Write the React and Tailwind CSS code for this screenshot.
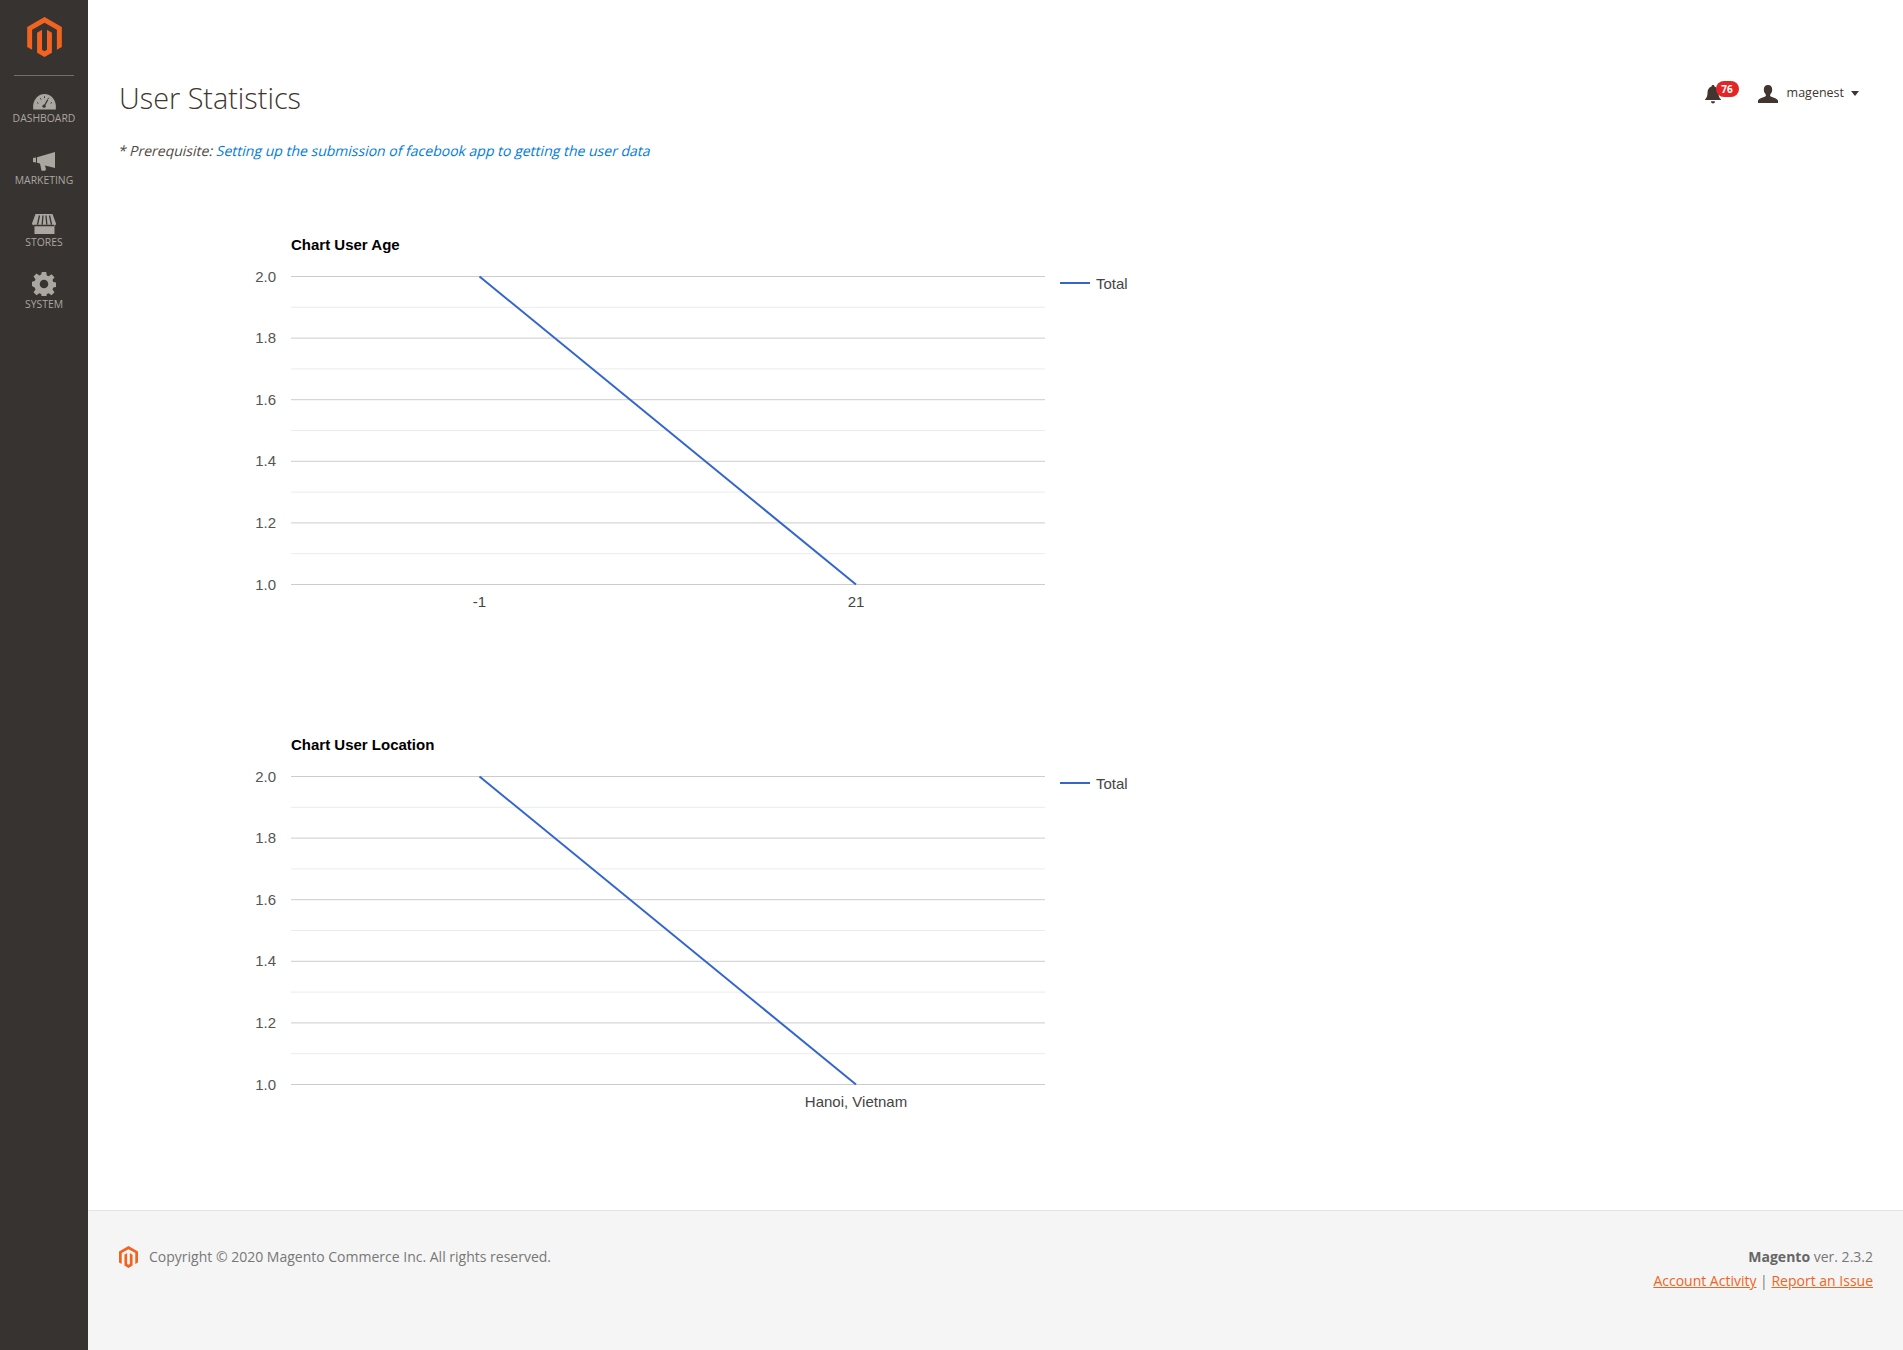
import React from "react";

const sideItems = [
  { label: "Dashboard", icon: GaugeIcon },
  { label: "Marketing", icon: MegaphoneIcon },
  { label: "Stores", icon: StoreIcon },
  { label: "System", icon: GearIcon },
];

function MagentoLogo({ className }) {
  return (
    <svg className={className} viewBox="1.6 0 20.8 24" fill="#f26322">
      <path d="M12 24l-4.455-2.572v-12l2.97-1.715v12.001l1.485.902 1.485-.902V7.713l2.97 1.715v12L12 24zM22.391 6v12l-2.967 1.714V7.713L12 3.43 4.574 7.713v12.001L1.609 18V6L12 0l10.391 6z" />
    </svg>
  );
}

function GaugeIcon() {
  return (
    <svg width="23" height="17" viewBox="0 0 24 18">
      <path fill="#aaa6a0" d="M0 17.500V13C1 5.500 6 1 12 1s11 4.500 12 12v4.500z" />
      <path stroke="#373330" strokeWidth="1" d="M4 10l1.500 1M7.500 5.500l1 1.500M12 3.500v2M16.500 5l-1 1.500M20 10l-1.500 1" />
      <path stroke="#373330" strokeWidth="1.300" d="M15.500 7l-3.300 6" />
      <circle cx="11.500" cy="14" r="1.700" fill="#373330" />
    </svg>
  );
}

function MegaphoneIcon() {
  return (
    <svg width="22" height="19" viewBox="0 0 22 19" className="mb-[1px]">
      <path fill="#aaa6a0" d="M0 6l3-.5v5L0 10zM4 5.200L22 0v16L12 13.500l1 4-1 1.200H8.500L7 11.500l-3-.7z" />
    </svg>
  );
}

function StoreIcon() {
  return (
    <svg width="24" height="20" viewBox="0 0 24 20">
      <path fill="#aaa6a0" d="M3.500 0h17L24 9.500c0 1-.5 1.800-1.500 1.800V20h-20v-8.700C1 11.300 0 10.500 0 9.500z" />
      <path stroke="#373330" strokeWidth="1.300" fill="none" d="M7.500 1.500L5.500 10.500M11 1.500l-.8 9M14 1.500l.8 9M17.500 1.500l2 9M2 11.500h20" />
    </svg>
  );
}

function GearIcon() {
  return (
    <svg width="24" height="24" viewBox="0 0 24 24">
      <path
        fill="#aaa6a0"
        fillRule="evenodd"
        d="M9.800 0h4.400l.6 3.400 1.900.8L19.500 2.200l3 3-2 2.800.8 1.900 3.100.6v4.400l-3.100.6-.8 1.900 2 2.800-3 3-2.800-2-1.900.8-.6 3.400H9.800l-.6-3.400-1.900-.8-2.800 2-3-3 2-2.800-.8-1.900L0 14.100V9.700l2.700-.6.800-1.900-2-2.800 3-3 2.800 2 1.900-.8zM12 7.700a4.300 4.300 0 1 0 0 8.600 4.300 4.300 0 0 0 0-8.600z"
      />
    </svg>
  );
}

function BellIcon() {
  return (
    <svg width="16" height="19" viewBox="0 0 16 19" fill="#41362f">
      <path d="M8 0c1 0 1.500.7 1.500 1.500C12.500 2.300 13.500 5 13.500 8c0 3 .8 5 2.500 6.500V15H0v-.5C1.700 13 2.500 11 2.500 8c0-3 1-5.700 4-6.500C6.500.7 7 0 8 0zM6 16.200h4C10 17.500 9 18.500 8 18.500S6 17.500 6 16.200z" />
    </svg>
  );
}

function UserIcon() {
  return (
    <svg width="20" height="18" viewBox="0 0 20 18" fill="#41362f">
      <path d="M10 0c2.800 0 4.200 2 4.200 4.500 0 2-1 4-2 5v1.500c1.500 1.500 6 1.500 7.800 4.500v2.500H0v-2.500C1.800 12.500 6.300 12.500 7.800 11V9.500c-1-1-2-3-2-5C5.800 2 7.200 0 10 0z" />
    </svg>
  );
}

const majorLines = [
  { y: 76, label: "2.0" },
  { y: 137.6, label: "1.8" },
  { y: 199.2, label: "1.6" },
  { y: 260.8, label: "1.4" },
  { y: 322.4, label: "1.2" },
  { y: 384, label: "1.0" },
];
const minorLines = [106.8, 168.4, 230, 291.6, 353.2];

function LineChart({ title, xLabels }) {
  return (
    <svg width="1100" height="500" className="block font-['Liberation_Sans',Arial,sans-serif]">
      <text x="172" y="50" fontSize="15" fontWeight="700" fill="#000">
        {title}
      </text>
      {minorLines.map((y) => (
        <rect key={y} x="172" y={y} width="754" height="1" fill="#ebebeb" />
      ))}
      {majorLines.map((line) => (
        <g key={line.label}>
          <rect x="172" y={line.y} width="754" height="1" fill="#cccccc" />
          <text x="157" y={line.y + 5.500} fontSize="15" textAnchor="end" fill="#555">
            {line.label}
          </text>
        </g>
      ))}
      <line x1="360.500" y1="76.500" x2="737" y2="384.500" stroke="#3366cc" strokeWidth="2" />
      {xLabels.map((item) => (
        <text key={item.text} x={item.x} y="407" fontSize="15" textAnchor="middle" fill="#444">
          {item.text}
        </text>
      ))}
      <rect x="941" y="82" width="30" height="2" fill="#3366cc" />
      <text x="977" y="89" fontSize="15" fill="#444">
        Total
      </text>
    </svg>
  );
}

export default function App() {
  return (
    <div className="flex min-h-[1350px] font-['Open_Sans',sans-serif]">
      <aside className="w-[88px] shrink-0 bg-[#373330] flex flex-col items-center">
        <div className="pt-[17px] pb-[18px] border-b border-[#736d67] w-[60px] flex justify-center">
          <MagentoLogo className="w-[35px] h-[40px]" />
        </div>
        <nav className="w-full pt-[5px] flex flex-col gap-[18px]">
          {sideItems.map((item) => (
            <a key={item.label} className="h-[44px] flex flex-col items-center justify-end text-[10.4px] leading-[14px] uppercase text-[#aaa6a0]">
              <item.icon />
              <span className="mt-[1px]">{item.label}</span>
            </a>
          ))}
        </nav>
      </aside>

      <div className="flex-1 flex flex-col">
        <main className="flex-1 pl-[31px] pr-[30px] pt-[80px]">
          <div className="flex justify-between items-start">
            <h1 className="text-[28.8px] leading-[36px] font-light text-[#41362f]">User Statistics</h1>
            <div className="flex items-center text-[#41362f] text-[12.5px] mt-[3px] pr-[14px]">
              <div className="relative w-[16px] h-[19px] mr-[37px] mt-[2px]">
                <BellIcon />
                <span className="absolute left-[11px] top-[-4px] w-[23px] h-[16px] rounded-full bg-[#e22626] text-white text-[10px] leading-[16px] font-bold text-center">
                  76
                </span>
              </div>
              <UserIcon />
              <span className="ml-[9px]">magenest</span>
              <span className="ml-[7px] w-0 h-0 border-x-[4px] border-x-transparent border-t-[5px] border-t-[#41362f]"></span>
            </div>
          </div>
          <p className="mt-[25px] text-sm leading-5 text-[#514943]">
            <span className="inline-block skew-x-[-14deg]">
              * Prerequisite: <a className="text-[#007bdb]">Setting up the submission of facebook app to getting the user data</a>
            </span>
          </p>
          <div className="mt-[39px]">
            <LineChart title="Chart User Age" xLabels={[{ text: "-1", x: 360.500 }, { text: "21", x: 737 }]} />
            <LineChart title="Chart User Location" xLabels={[{ text: "Hanoi, Vietnam", x: 737 }]} />
          </div>
        </main>

        <footer className="h-[140px] border-t border-[#e3e3e3] bg-[#f5f5f5] pl-[31px] pr-[30px] pt-[34px] flex justify-between items-start text-sm leading-6 text-[#777]">
          <div className="flex items-center">
            <MagentoLogo className="w-[19px] h-[22px] mr-[11px]" />
            <span>Copyright © 2020 Magento Commerce Inc. All rights reserved.</span>
          </div>
          <div className="text-right">
            <div>
              <strong className="font-bold text-[#666]">Magento</strong> ver. 2.3.2
            </div>
            <div>
              <a className="text-[#f26322] underline">Account Activity</a> | <a className="text-[#f26322] underline">Report an Issue</a>
            </div>
          </div>
        </footer>
      </div>
    </div>
  );
}
